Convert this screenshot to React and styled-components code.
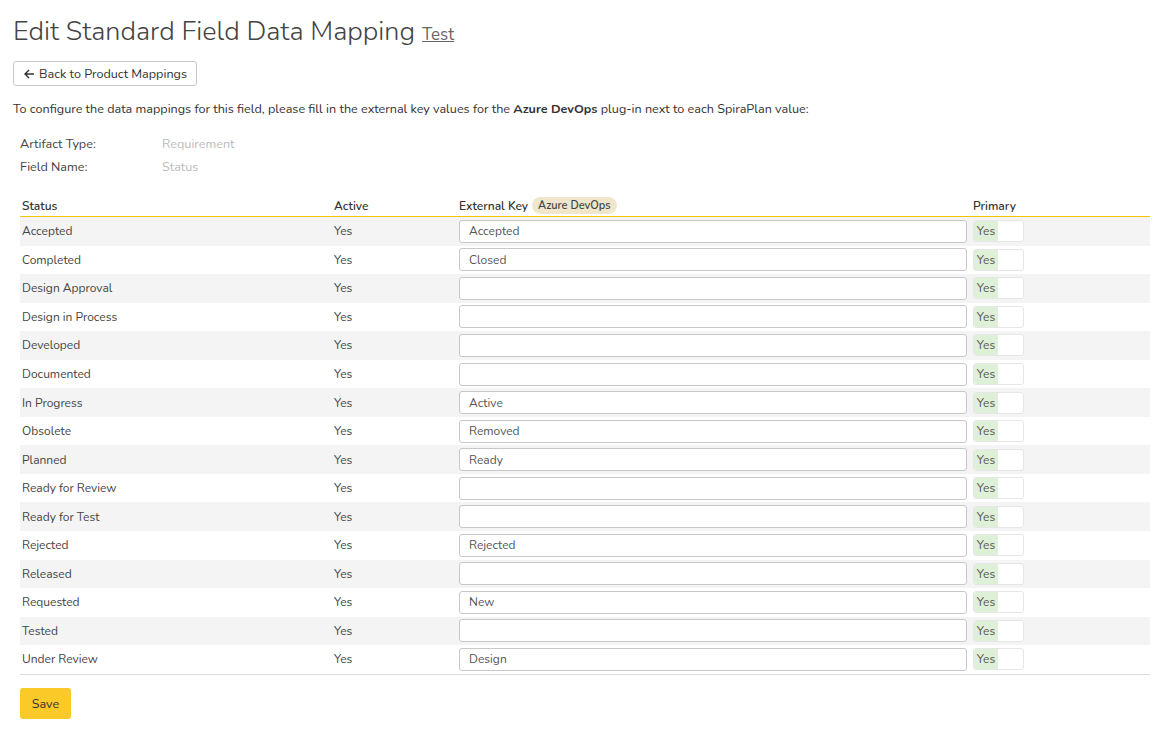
import React from "react";
import styled, { createGlobalStyle } from "styled-components";

const GlobalStyle = createGlobalStyle`
  body {
    margin: 0;
    background: #fff;
    font-family: "Nunito", Lato, "Open Sans", sans-serif;
    color: #333;
  }
`;

const Page = styled.div`
  padding: 14px 13px 10px 13px;
`;

const Title = styled.h1`
  margin: 0;
  font-size: 27px;
  font-weight: 300;
  color: #444;
  line-height: 36px;
  display: flex;
  align-items: baseline;
  gap: 7px;
`;

const TitleLink = styled.a`
  font-size: 17px;
  color: #666;
  text-decoration: underline;
  font-weight: 400;
`;

const BackButton = styled.button`
  margin-top: 8px;
  height: 25px;
  padding: 0 9px 0 10px;
  border: 1px solid #c8c8c8;
  border-radius: 3px;
  background: #fff;
  font-family: inherit;
  font-size: 12.6px;
  color: #333;
  display: flex;
  align-items: center;
  gap: 4px;
`;

const Intro = styled.p`
  margin: 14px 0 0 0;
  font-size: 12.6px;
  line-height: 18px;
  color: #333;
  b {
    font-weight: 700;
  }
`;

const Info = styled.div`
  margin: 17px 0 0 7px;
  display: grid;
  grid-template-columns: 142px auto;
  row-gap: 5px;
  font-size: 12.6px;
  line-height: 18px;
`;

const Label = styled.div`
  color: #444;
`;

const Value = styled.div`
  color: #bbb;
`;

const Table = styled.div`
  margin: 19px 1px 0 7px;
  border-bottom: 1px solid #ddd;
`;

const Row = styled.div`
  display: grid;
  grid-template-columns: 312px 125px 514px 1fr;
  align-items: center;
  height: ${(p) => (p.$header ? "21px" : "28.55px")};
  padding-left: 2px;
  font-size: 12px;
  background: ${(p) => (p.$shade ? "#f4f4f4" : "#fff")};
  border-bottom: ${(p) => (p.$header ? "1px solid #f5c200" : "none")};
  color: ${(p) => (p.$header ? "#333" : "#444")};
`;

const HeadCell = styled.div`
  display: flex;
  align-items: center;
  gap: 4px;
  font-weight: 600;
`;

const Badge = styled.span`
  background: #f0e6cc;
  border-radius: 9px;
  padding: 1px 6px;
  font-size: 11px;
  font-weight: 600;
  color: #444;
`;

const KeyInput = styled.input`
  box-sizing: border-box;
  width: 508px;
  height: 23px;
  border: 1px solid #c8c8c8;
  border-radius: 3px;
  background: #fff;
  padding: 0 9px;
  font-family: inherit;
  font-size: 12px;
  color: #555;
  outline: none;
`;

const Toggle = styled.div`
  box-sizing: border-box;
  width: 51px;
  height: 22px;
  border: 1px solid #e6e6e6;
  border-radius: 3px;
  background: #fff;
  display: flex;
  overflow: hidden;
`;

const ToggleOn = styled.span`
  width: 24px;
  background: #dff0d8;
  font-size: 12px;
  color: #555;
  display: flex;
  align-items: center;
  justify-content: center;
`;

const SaveButton = styled.button`
  margin: 13px 0 0 7px;
  width: 51px;
  height: 31px;
  border: none;
  border-radius: 3px;
  background: #fcca28;
  font-family: inherit;
  font-size: 12.6px;
  color: #333;
`;

const rows = [
  ["Accepted", "Accepted"],
  ["Completed", "Closed"],
  ["Design Approval", ""],
  ["Design in Process", ""],
  ["Developed", ""],
  ["Documented", ""],
  ["In Progress", "Active"],
  ["Obsolete", "Removed"],
  ["Planned", "Ready"],
  ["Ready for Review", ""],
  ["Ready for Test", ""],
  ["Rejected", "Rejected"],
  ["Released", ""],
  ["Requested", "New"],
  ["Tested", ""],
  ["Under Review", "Design"],
];

export default function App() {
  return (
    <Page>
      <GlobalStyle />
      <Title>
        Edit Standard Field Data Mapping <TitleLink>Test</TitleLink>
      </Title>
      <BackButton>
        <svg width="11" height="10" viewBox="0 0 11 10">
          <path d="M10 5H1.5M5 1L1 5l4 4" fill="none" stroke="#333" strokeWidth="1.4" />
        </svg>
        Back to Product Mappings
      </BackButton>
      <Intro>
        To configure the data mappings for this field, please fill in the external key values for the{" "}
        <b>Azure DevOps</b> plug-in next to each SpiraPlan value:
      </Intro>
      <Info>
        <Label>Artifact Type:</Label>
        <Value>Requirement</Value>
        <Label>Field Name:</Label>
        <Value>Status</Value>
      </Info>
      <Table>
        <Row $header>
          <HeadCell>Status</HeadCell>
          <HeadCell>Active</HeadCell>
          <HeadCell>
            External Key <Badge>Azure DevOps</Badge>
          </HeadCell>
          <HeadCell>Primary</HeadCell>
        </Row>
        {rows.map(([name, key], i) => (
          <Row key={name} $shade={i % 2 === 0}>
            <div>{name}</div>
            <div>Yes</div>
            <div>
              <KeyInput defaultValue={key} />
            </div>
            <div>
              <Toggle>
                <ToggleOn>Yes</ToggleOn>
              </Toggle>
            </div>
          </Row>
        ))}
      </Table>
      <SaveButton>Save</SaveButton>
    </Page>
  );
}
